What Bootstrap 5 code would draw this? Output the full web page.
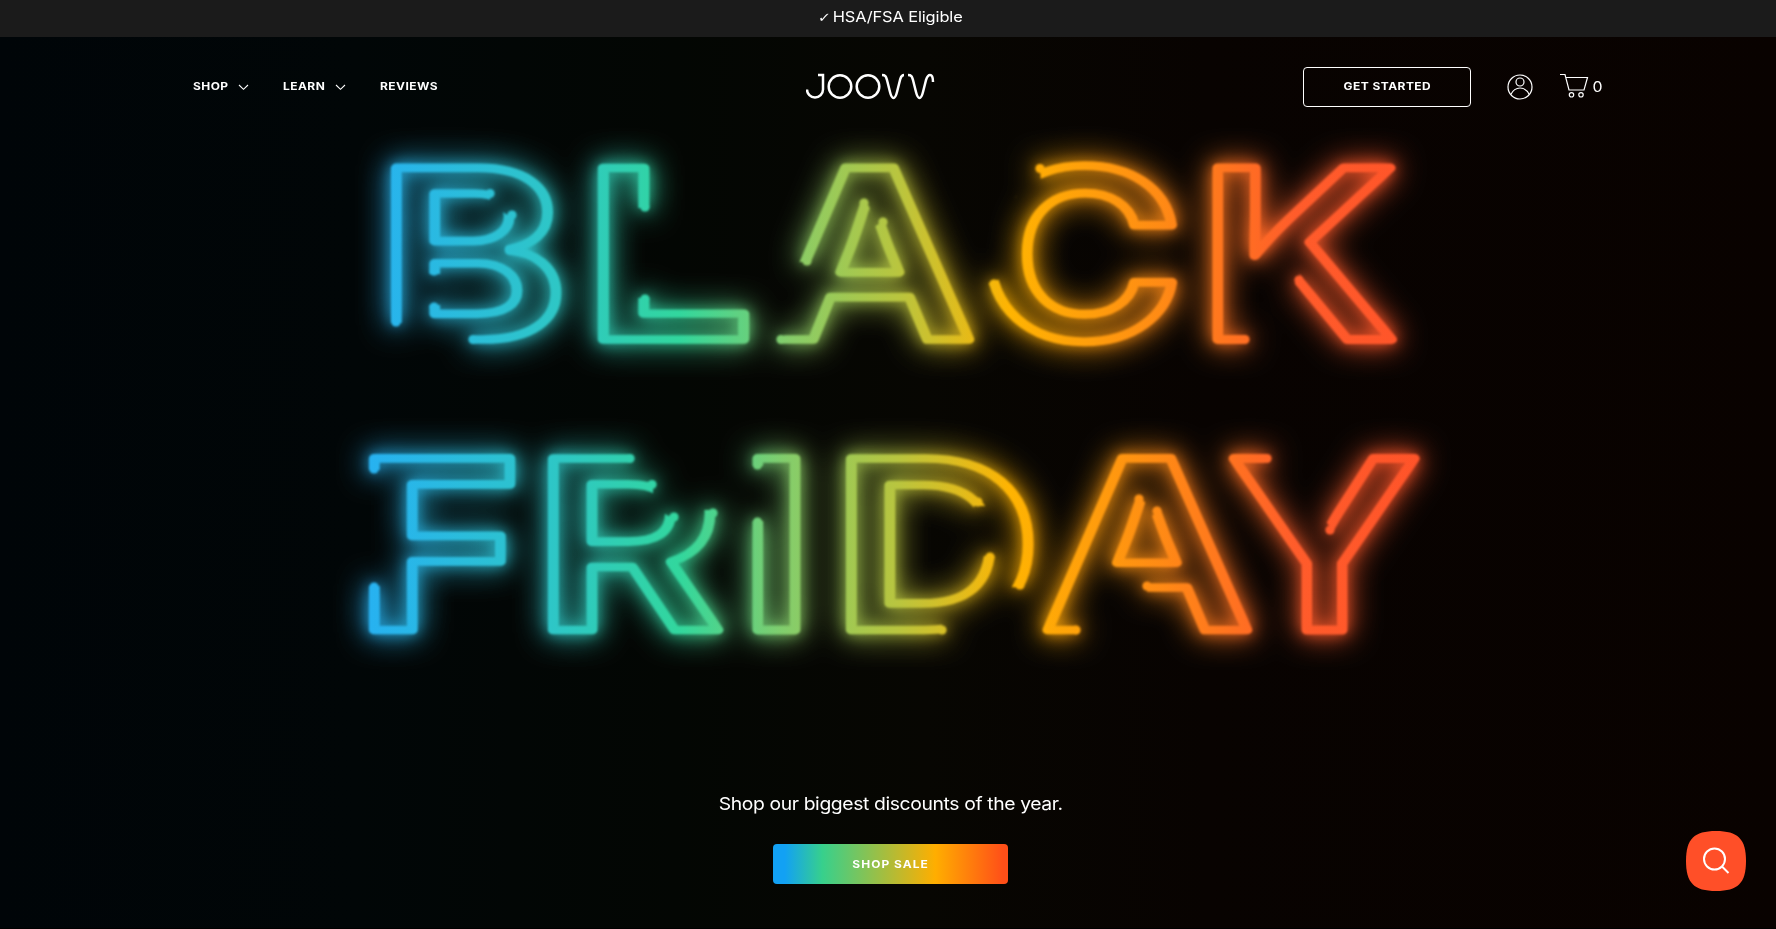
<!DOCTYPE html>
<html lang="en">
<head>
<meta charset="utf-8">
<meta name="viewport" content="width=device-width, initial-scale=1">
<title>Joovv Black Friday</title>
<link href="https://cdn.jsdelivr.net/npm/bootstrap@5.3.0/dist/css/bootstrap.min.css" rel="stylesheet">
<style>
body{font-family:Inter,"Liberation Sans",sans-serif;background:#000;color:#fff;overflow:hidden}
.promo{height:37px;background:#1b1b1b;font-size:14.4px;letter-spacing:-.1px;padding:0 0 3px 5px}
.tick{font-family:"DejaVu Sans",sans-serif;font-size:13px;font-weight:700;display:inline-block;margin-right:-2px;transform:skewX(-4deg)}
.wide{display:inline-block;transform:scaleX(1.14);white-space:nowrap}
.hero{height:891px;background:linear-gradient(90deg,#000508 0%,#010607 20%,#030603 38%,#070602 52%,#080301 68%,#090200 100%)}
.topbar{height:73px;padding:30px 174px 3px 193px}
.menu{width:613px}
.menu a{font-size:10.5px;font-weight:700;letter-spacing:.4px;color:#fff;text-decoration:none;line-height:40px}
.fit{display:block}
.fit .wide{transform-origin:0 50%}
.w-shop{width:45px}.w-learn{width:52px}
.start{width:168px;height:40px;border:1.4px solid #fff;border-radius:4px;font-size:10.5px;line-height:36px;font-weight:700;letter-spacing:.4px;color:#fff;padding:0}
.count{font-size:14px;line-height:39px}
.sign{display:block;width:1776px;height:600px;overflow:visible;mix-blend-mode:screen;pointer-events:none}
.sign text{font-family:Inter,sans-serif;font-weight:600;font-size:235.8px;fill:none;stroke:#fff;stroke-width:9.8;stroke-linejoin:round;vector-effect:non-scaling-stroke}
.caps circle{r:4.6px}
.tint{mix-blend-mode:multiply}
.sale{padding:81px 0 0 5px}
.sale p{font-size:17.5px;line-height:26px;letter-spacing:-.35px;margin:0 0 27px}
.sale p .wide{transform:scaleX(1.105)}
.sale .btn{width:235px;height:40px;border:0;border-radius:4px;padding:1px 0 0;color:#fff;font-size:10.5px;font-weight:700;letter-spacing:.9px;background:linear-gradient(90deg,#12a1f4 0%,#12a1f4 5%,#37d08c 21%,#ffae00 69%,#ff4f18 98%)}
.finder{right:30px;bottom:38px;width:60px;height:60px}
</style>
</head>
<body>
<div class="promo d-flex align-items-center justify-content-center"><span class="wide"><span class="tick">✓</span> HSA/FSA Eligible</span></div>
<main class="hero">
  <header class="topbar d-flex">
    <nav class="menu d-flex">
      <a href="#" class="fit w-shop"><span class="wide">SHOP</span></a>
      <svg width="45" height="40" fill="none" stroke="#fff" stroke-width="1.100"><path d="M1 18l4.500 4.300 4.500-4.300"/></svg>
      <a href="#" class="fit w-learn"><span class="wide">LEARN</span></a>
      <svg width="45" height="40" fill="none" stroke="#fff" stroke-width="1.100"><path d="M1 18l4.500 4.300 4.500-4.300"/></svg>
      <a href="#" class="fit"><span class="wide">REVIEWS</span></a>
    </nav>
    <svg width="130" height="40" viewBox="806 67 130 40" fill="none" stroke="#fff" stroke-width="2.500" role="img" aria-label="Joovv">
      <path d="M818 75h5v14.500a8 8 0 0 1-16 0"/><circle cx="840" cy="86.500" r="11.300"/><circle cx="868" cy="86.500" r="11.300"/>
      <path d="M882 75c4 0 4 2 5 5l3 12c1 4 2 6 3.500 6s2.500-2 3.500-6l3-12c1-3 1-5 4-5M908 75c4 0 4 2 5 5l3 12c1 4 2 6 3.500 6s2.500-2 3.500-6l3-12c1-3 2-5 4-5s3 3 3 7"/>
    </svg>
    <div class="d-flex ms-auto align-items-start">
      <button class="btn start"><span class="wide">GET STARTED</span></button>
      <svg width="86" height="41" viewBox="1471 67 86 41" fill="none" stroke="#fff" stroke-width="1.200"><circle cx="1520" cy="87" r="12"/><circle cx="1520" cy="82" r="4"/><path d="M1510.800 94.500c2-4 5-6.500 9.200-6.500s7.200 2.500 9.200 6.500"/></svg>
      <svg width="32" height="41" viewBox="1557 67 32 41" fill="none" stroke="#fff" stroke-width="1.200"><path d="M1560 74.500h5l4 15.500h15l3.500-12.500h-21.500"/><circle cx="1571.500" cy="94.800" r="2.200"/><circle cx="1581" cy="94.800" r="2.200"/></svg>
      <span class="wide ms-1 count">0</span>
    </div>
  </header>

  <svg class="sign" viewBox="0 110 1776 600" role="img" aria-label="Black Friday">
    <defs>
      <linearGradient id="neon" gradientUnits="userSpaceOnUse" x1="350" y1="0" x2="1450" y2="0">
        <stop offset=".02" stop-color="#26b0f0"/><stop offset=".19" stop-color="#2cc6c4"/><stop offset=".3" stop-color="#30d69c"/><stop offset=".4" stop-color="#84cc68"/><stop offset=".5" stop-color="#b8c43c"/><stop offset=".6" stop-color="#ffb200"/><stop offset=".74" stop-color="#ff8814"/><stop offset=".86" stop-color="#ff5a2a"/><stop offset="1" stop-color="#ff5028"/>
      </linearGradient>
      <filter id="glow" filterUnits="userSpaceOnUse" x="150" y="10" width="1480" height="800" color-interpolation-filters="sRGB">
        <feGaussianBlur in="SourceGraphic" stdDeviation="1.200" result="core"/>
        <feGaussianBlur in="SourceGraphic" stdDeviation="7" result="near"/>
        <feGaussianBlur in="SourceGraphic" stdDeviation="15" result="far"/>
        <feComposite in="near" in2="far" operator="arithmetic" k2=".5" k3="1.350" result="halo"/>
        <feComposite in="core" in2="halo" operator="arithmetic" k2="1" k3="1" k1="-1"/>
      </filter>
    </defs>
    <g filter="url(#glow)">
      <rect x="150" y="10" width="1480" height="800"/>
      <g id="letters">
        <text data-l="396" data-r="556" data-b="339.500">B</text>
        <text data-l="603" data-r="744" data-b="339.500">L</text>
        <text data-l="771" data-r="969" data-b="339.500">A</text>
        <text data-l="989" data-r="1172" data-b="339.500">C</text>
        <text data-l="1217.500" data-r="1392" data-b="339.500">K</text>
        <text data-l="374" data-r="511" data-b="630">F</text>
        <text data-l="553" data-r="719" data-b="630">R</text>
        <text data-l="757.500" data-r="795" data-b="630">I</text>
        <text data-l="851" data-r="1029" data-b="630">D</text>
        <text data-l="1047" data-r="1247" data-b="630">A</text>
        <text data-l="1233" data-r="1415" data-b="630">Y</text>
      </g>
      <!-- unlit gaps in the tubes -->
      <g>
        <path d="M385 323h25v5h63v22h-88zM490 185h25l9 13-2 13-15 4-11-8-6-3zM423 274h21v31h-21z"/>
        <path d="M636 208h24v90h-24z"/>
        <path d="M790 262h25l-9 20-14 36-6 12-6 16h-18v-26zM855 180h35l6 33-22 14-5-21-14-7z"/>
        <path d="M1039 150l2 33-25 14-10 18-4 35 2 28-31 10V150z"/>
        <path d="M1246 352v-74l10-6 26-20 15 10 3 14-10 14-22 10v52z"/>
        <path d="M363 470h22v116h-22z"/>
        <path d="M630 448h100v62h-30l-10-5v7l-22 4-12-9-3-11v-20l-23-6z"/>
        <path d="M747 466h21v55h-21z"/>
        <path d="M942 618l38-6 28-25 32 1v57h-98zM974 506h36v50h-32z"/>
        <path d="M1077 645v-23l5-2 14-44h51v21l-32 3-17 45zM1130 470h34l4 34-19 14-4-16-14-7z"/>
        <path d="M1268 447h15l9 21 34 54 10 12-6 21-16-5-50-80z"/>
      </g>
      <!-- rounded tube ends beside each gap -->
      <g class="caps" fill="#fff">
        <circle cx="396" cy="322"/><circle cx="473" cy="339.500"/><circle cx="490" cy="193.500"/><circle cx="512" cy="215"/><circle cx="434" cy="271"/><circle cx="434" cy="307"/>
        <circle cx="645" cy="207"/><circle cx="645" cy="299"/>
        <circle cx="807" cy="261"/><circle cx="781" cy="339.500"/><circle cx="864" cy="203"/><circle cx="883" cy="222"/>
        <circle cx="1040" cy="168.500"/><circle cx="994" cy="284"/>
        <circle cx="1245" cy="339.500"/><circle cx="1299" cy="280"/>
        <circle cx="374" cy="469"/><circle cx="374" cy="587"/>
        <circle cx="630" cy="458.500"/><circle cx="652" cy="484.500"/><circle cx="674" cy="517"/><circle cx="713" cy="513"/>
        <circle cx="757.500" cy="465"/><circle cx="757.500" cy="522"/>
        <circle cx="942" cy="630"/><circle cx="1020" cy="585"/><circle cx="978" cy="502"/><circle cx="990" cy="557"/>
        <circle cx="1076" cy="630"/><circle cx="1147" cy="586"/><circle cx="1139" cy="499"/><circle cx="1157" cy="511"/>
        <circle cx="1267" cy="458.500"/><circle cx="1330" cy="530"/>
      </g>
    </g>
    <rect class="tint" x="220" y="60" width="1340" height="690" fill="url(#neon)"/>
  </svg>

  <section class="sale text-center">
    <p><span class="wide">Shop our biggest discounts of the year.</span></p>
    <a class="btn d-inline-flex align-items-center justify-content-center" href="#"><span class="wide">SHOP SALE</span></a>
  </section>
</main>
<button class="finder btn p-0 border-0 position-fixed" aria-label="Search"><svg width="60" height="60" fill="none" stroke="#fff" stroke-width="2"><path fill="#ff4f28" stroke="none" d="M30 0C52 0 60 8 60 30S52 60 30 60 0 52 0 30 8 0 30 0z"/><circle cx="28.500" cy="28" r="10.500"/><path d="M36 35.500l6.500 6.500"/></svg></button>
<script src="https://cdn.jsdelivr.net/npm/bootstrap@5.3.0/dist/js/bootstrap.bundle.min.js"></script>
<script>
/* Stretch every sign letter between its left and right edge. */
const ctx=document.createElement('canvas').getContext('2d');
ctx.font='600 235.8px Inter, sans-serif';
document.querySelectorAll('#letters text').forEach(t=>{
  const m=ctx.measureText(t.textContent),l=-m.actualBoundingBoxLeft,r=m.actualBoundingBoxRight;
  const s=(t.dataset.r-t.dataset.l)/(r-l);
  t.setAttribute('transform',`translate(${t.dataset.l-l*s} ${t.dataset.b}) scale(${s} 1)`);
});
</script>
</body>
</html>
